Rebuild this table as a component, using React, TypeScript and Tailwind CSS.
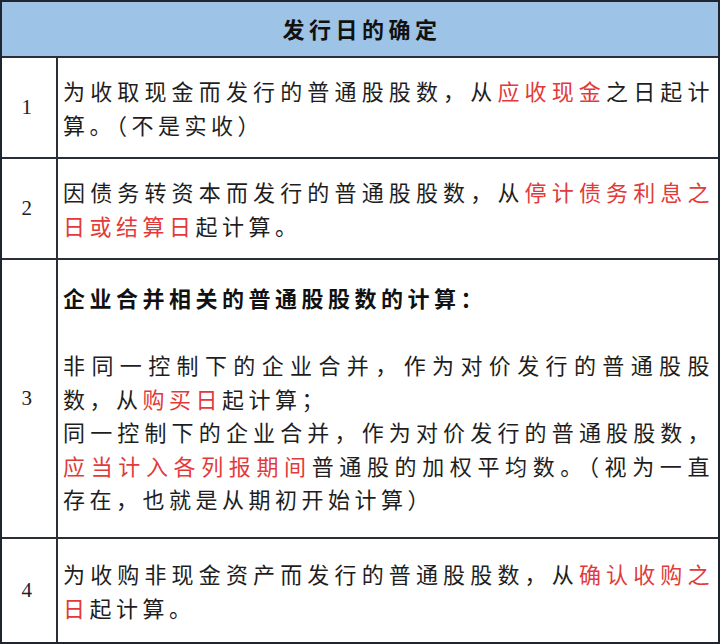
import React from "react";

const R = ({ children }: { children: React.ReactNode }) => (
  <span className="text-[#e23a3a]">{children}</span>
);

function Row({
  n,
  h,
  children,
  last,
}: {
  n: string;
  h: string;
  children: React.ReactNode;
  last?: boolean;
}) {
  return (
    <div className={`flex border-t-2 border-[#2a2f36] ${h}`}>
      <div className="w-[56px] shrink-0 border-r-2 border-[#2a2f36] flex items-center justify-center font-['Liberation_Serif',serif] text-[21px] text-[#222]">
        {n}
      </div>
      <div className="flex-1 pl-[5px] pr-[4px] flex flex-col justify-center">
        {children}
      </div>
    </div>
  );
}

export default function App() {
  return (
    <div className="w-[720px] h-[644px] bg-white border-2 border-[#1f2630] flex flex-col font-['Noto_Sans_CJK_SC','Noto_Sans',sans-serif] text-[22px] leading-[33.5px] tracking-[4.5px] text-[#1e1e1e] box-border">
      <div className="h-[54px] shrink-0 bg-[#9dc3e6] flex items-center justify-center font-bold text-[#111] pl-[4px]">
        发行日的确定
      </div>
      <Row n="1" h="h-[101px]">
        <p className="text-justify">
          为收取现金而发行的普通股股数，从<R>应收现金</R>之日起计算。（不是实收）
        </p>
      </Row>
      <Row n="2" h="h-[101px]">
        <p className="text-justify">
          因债务转资本而发行的普通股股数，从<R>停计债务利息之日或结算日</R>起计算。
        </p>
      </Row>
      <Row n="3" h="h-[279px]">
        <p className="font-bold text-[#111]">企业合并相关的普通股股数的计算：</p>
        <div className="h-[33.5px]" />
        <p className="text-justify">
          非同一控制下的企业合并，作为对价发行的普通股股数，从<R>购买日</R>起计算；
        </p>
        <p className="text-justify">
          同一控制下的企业合并，作为对价发行的普通股股数，<R>应当计入各列报期间</R>普通股的加权平均数。（视为一直存在，也就是从期初开始计算）
        </p>
      </Row>
      <Row n="4" h="flex-1">
        <p className="text-justify">
          为收购非现金资产而发行的普通股股数，从<R>确认收购之日</R>起计算。
        </p>
      </Row>
    </div>
  );
}
